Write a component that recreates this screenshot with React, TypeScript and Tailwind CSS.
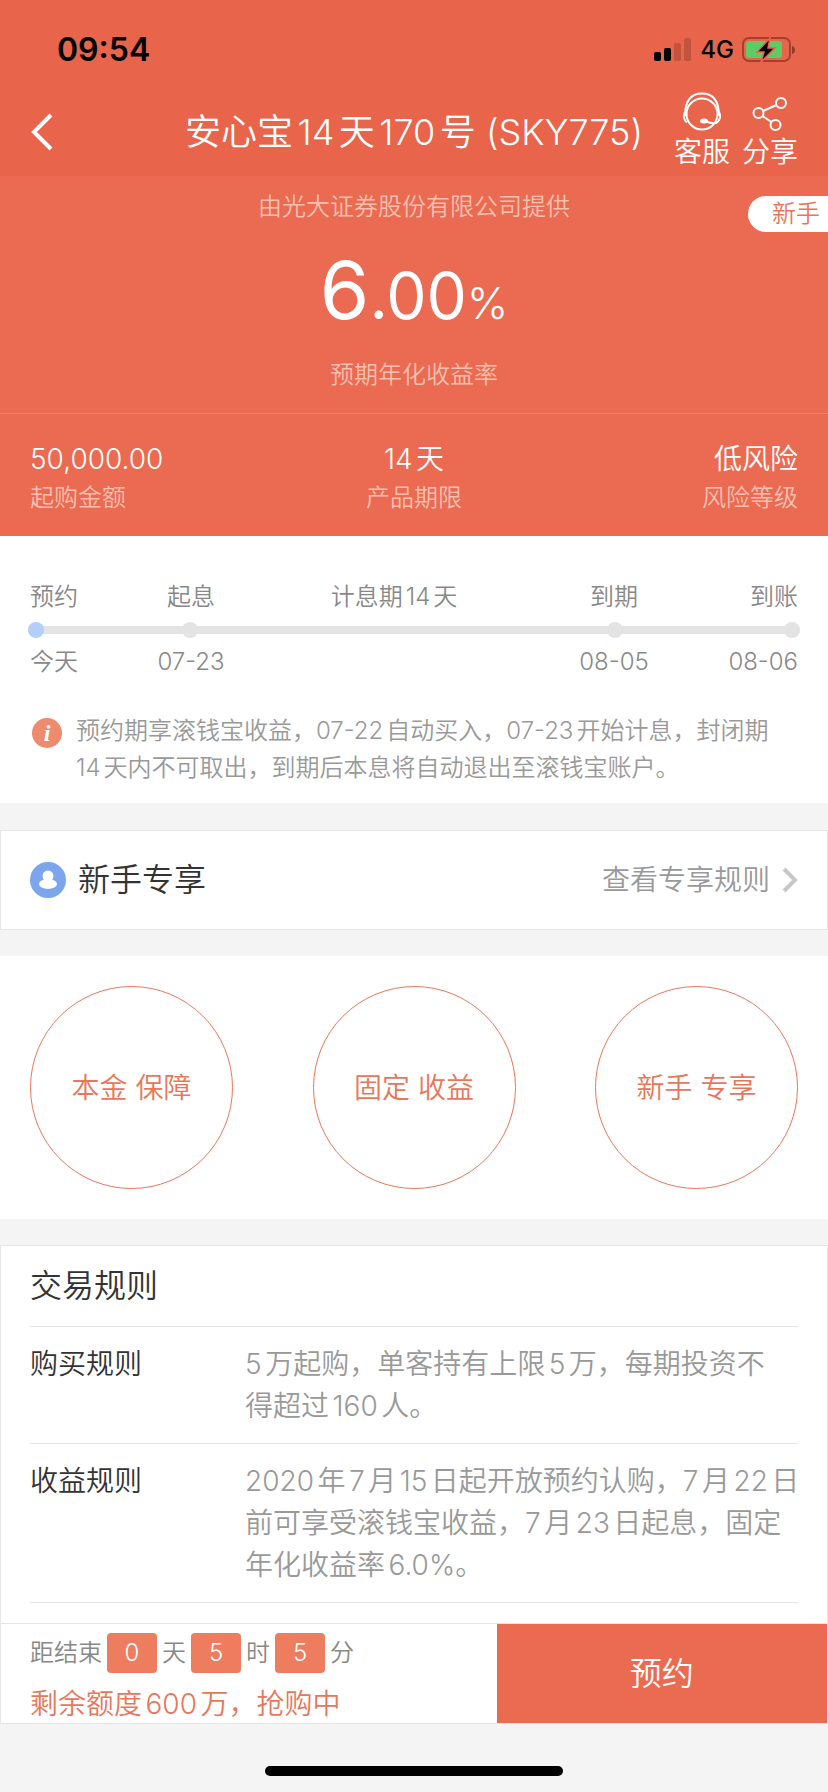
import React from 'react';

interface Step {
  label: string;
  date?: string;
  active?: boolean;
}

interface Rule {
  name: string;
  text: string;
}

const STEPS: Step[] = [
  { label: '预约', date: '今天', active: true },
  { label: '起息', date: '07-23' },
  { label: '计息期14天' },
  { label: '到期', date: '08-05' },
  { label: '到账', date: '08-06' },
];

const STEP_ALIGN = ['text-left', 'text-center', 'text-center', 'text-center', 'text-right'];
const DOT_ALIGN = ['justify-self-start', 'justify-self-center', '', 'justify-self-center', 'justify-self-end'];
const STEP_GRID = 'grid grid-cols-[81fr_160fr_246fr_194fr_87fr]';

const FEATURES = ['本金 保障', '固定 收益', '新手 专享'];

const RULES: Rule[] = [
  { name: '购买规则', text: '5万起购，单客持有上限5万，每期投资不\n得超过160人。' },
  {
    name: '收益规则',
    text: '2020年7月15日起开放预约认购，7月22日\n前可享受滚钱宝收益，7月23日起息，固定\n年化收益率6.0%。',
  },
];

const COUNTDOWN = [
  { value: 0, unit: '天' },
  { value: 5, unit: '时' },
  { value: 5, unit: '分' },
];

const StatusBar = () => (
  <div className="flex h-[88px] items-center justify-between pt-3 pr-8 pl-[57px] text-black">
    <span className="text-[32px] font-semibold">09:54</span>
    <div className="flex items-center gap-2">
      <svg width="38" height="24" viewBox="0 0 38 24">
        <rect x="0" y="14" width="7" height="9" rx="2" />
        <rect x="10" y="10" width="7" height="13" rx="2" />
        <rect x="20" y="5" width="7" height="18" rx="2" fill="#8f3a2b" opacity="0.4" />
        <rect x="30" y="0" width="7" height="23" rx="2" fill="#8f3a2b" opacity="0.4" />
      </svg>
      <span className="text-2xl font-medium">4G</span>
      <svg width="54" height="26" viewBox="0 0 54 26">
        <rect x="1" y="1" width="47" height="23" rx="6" fill="none" stroke="#a3402e" strokeWidth="2" />
        <rect x="4" y="4" width="36" height="17" rx="3" fill="#5ecb64" />
        <path d="M50 9c4 1 4 7 0 8z" fill="#8f3a2b" />
        <path d="M28 1 15 15h7l-3 10 14-14h-7z" stroke="#e8644b" strokeWidth="1.5" />
      </svg>
    </div>
  </div>
);

const HeadsetIcon = () => (
  <svg width="40" height="40" viewBox="0 0 40 40" fill="none" stroke="currentColor" strokeWidth="2">
    <circle cx="20" cy="22" r="15.500" />
    <path d="M3 24C3 8 10 1.500 20 1.500S37 8 37 24" />
    <path d="M3 20c-2 3-1.500 8 2 10.500M37 20c2 3 1.500 8-2 10.500-3 1.500-7 .5-11-1" />
    <ellipse cx="22" cy="29" rx="3" ry="1.500" fill="currentColor" />
  </svg>
);

const ShareIcon = () => (
  <svg width="40" height="40" viewBox="0 0 40 40" fill="none" stroke="currentColor" strokeWidth="2">
    <circle cx="8.500" cy="21" r="5" />
    <circle cx="31" cy="11" r="5" />
    <circle cx="25.500" cy="33" r="5" />
    <path d="m13 19 13.500-6M12.500 24l9 6" />
  </svg>
);

const Hero = () => (
  <section className="relative bg-[#ea6b51] text-white">
    <a
      href="#newcomer"
      className="absolute top-5 right-0 flex h-9 items-center rounded-l-full bg-white pr-2 pl-6 text-2xl text-[#e8775a]"
    >
      新手
    </a>
    <div className="flex flex-col items-center pt-[13px]">
      <p className="text-2xl leading-9 text-[#f9bfb0]">由光大证券股份有限公司提供</p>
      <p className="mt-[15px] flex h-[100px] items-baseline leading-[100px]">
        <span className="text-[80px] font-normal">6</span>
        <span className="text-[64px] font-normal">.00</span>
        <span className="text-[44px]">%</span>
      </p>
      <p className="mt-[17px] text-2xl leading-9 text-[#f9bfb0]">预期年化收益率</p>
    </div>
    <dl className="mt-5 grid grid-cols-3 border-t border-[#f08069] px-[30px] pt-6 pb-5">
      <div className="flex flex-col-reverse">
        <dt className="text-2xl leading-9 text-[#f9bfb0]">起购金额</dt>
        <dd className="text-[28px] leading-[42px]">50,000.00</dd>
      </div>
      <div className="flex flex-col-reverse text-center">
        <dt className="text-2xl leading-9 text-[#f9bfb0]">产品期限</dt>
        <dd className="text-[28px] leading-[42px]">14天</dd>
      </div>
      <div className="flex flex-col-reverse text-right">
        <dt className="text-2xl leading-9 text-[#f9bfb0]">风险等级</dt>
        <dd className="text-[28px] leading-[42px]">低风险</dd>
      </div>
    </dl>
  </section>
);

const Timeline = () => (
  <section className="bg-white px-[30px] pt-[43px] pb-4">
    <div className={`${STEP_GRID} text-2xl leading-9 text-[#888]`}>
      {STEPS.map((step, i) => (
        <span key={step.label} className={`whitespace-nowrap ${STEP_ALIGN[i]}`}>
          {step.label}
        </span>
      ))}
    </div>
    <div className={`${STEP_GRID} -mx-0.5 mt-[11px] h-2 grid-rows-[8px] items-center rounded-full bg-[#e3e3e3]`}>
      {STEPS.map((step, i) => (
        <span
          key={step.label}
          className={`${step.date ? 'size-4' : 'size-0'} rounded-full ${step.active ? 'bg-[#b1cff8]' : 'bg-[#e3e3e3]'} ${DOT_ALIGN[i]}`}
        />
      ))}
    </div>
    <div className={`${STEP_GRID} mt-[10px] text-2xl leading-9 text-[#888]`}>
      {STEPS.map((step, i) => (
        <span key={step.label} className={STEP_ALIGN[i]}>
          {step.date}
        </span>
      ))}
    </div>
    <div className="mt-8 flex gap-[14px]">
      <span className="mt-[6px] ml-0.5 flex size-[30px] shrink-0 items-center justify-center rounded-full bg-[#ee8a6d] font-['Liberation_Serif',serif] text-2xl font-bold text-white italic">
        i
      </span>
      <p className="pb-px text-2xl leading-[37px] whitespace-pre-line text-[#999]">
        {'预约期享滚钱宝收益，07-22自动买入，07-23开始计息，封闭期\n14天内不可取出，到期后本息将自动退出至滚钱宝账户。'}
      </p>
    </div>
  </section>
);

export default function App() {
  return (
    <div className="flex min-h-screen flex-col bg-[#f4f4f4] font-[Inter,'Noto_Sans_CJK_SC',sans-serif] font-[350] [text-autospace:normal]">
      <header className="bg-[#e8644b] text-white">
        <StatusBar />
        <div className="grid h-[88px] grid-cols-[1fr_auto_1fr] items-center px-[30px]">
          <button type="button" aria-label="返回" className="w-12 cursor-pointer">
            <svg width="24" height="38" viewBox="0 0 24 38" fill="none" stroke="currentColor" strokeWidth="4">
              <path d="M21 2 4 19l17 17" />
            </svg>
          </button>
          <h1 className="text-4xl font-[350] whitespace-nowrap">安心宝14天170号 (SKY775)</h1>
          <nav className="flex justify-end gap-3 text-[28px] leading-10">
            <button type="button" className="flex cursor-pointer flex-col items-center">
              <HeadsetIcon />
              客服
            </button>
            <button type="button" className="flex cursor-pointer flex-col items-center">
              <ShareIcon />
              分享
            </button>
          </nav>
        </div>
      </header>

      <Hero />
      <Timeline />

      <section
        id="newcomer"
        className="mt-[27px] flex h-[100px] items-center justify-between border border-[#e6e6e6] bg-white px-[29px]"
      >
        <h2 className="flex items-center gap-3 text-[32px] font-[350] text-[#333]">
          <svg width="36" height="36" viewBox="0 0 36 36">
            <circle cx="18" cy="18" r="18" fill="#7ba6ee" />
            <circle cx="18" cy="14" r="5.500" fill="#fff" />
            <ellipse cx="18" cy="22" rx="9" ry="5" fill="#fff" />
          </svg>
          新手专享
        </h2>
        <a href="#rules" className="flex items-center gap-3 text-[28px] text-[#999]">
          查看专享规则
          <svg width="16" height="26" viewBox="0 0 16 26" fill="none" stroke="#c7c7c7" strokeWidth="4">
            <path d="m2 2 11 11L2 24" />
          </svg>
        </a>
      </section>

      <section className="mt-[26px] flex justify-between bg-white p-[30px]">
        {FEATURES.map((feature) => (
          <div
            key={feature}
            className="flex size-[203px] items-center justify-center rounded-full border border-[#e8775a] text-[28px] text-[#e8775a]"
          >
            {feature}
          </div>
        ))}
      </section>

      <section id="rules" className="mt-[26px] grow border border-b-0 border-[#e6e6e6] bg-white px-[29px] pb-5">
        <h2 className="border-b border-[#e6e6e6] py-4 text-[32px] leading-[48px] font-[350] text-[#333]">交易规则</h2>
        <dl>
          {RULES.map((rule) => (
            <div key={rule.name} className="flex border-b border-[#e6e6e6] py-4 text-[28px] leading-[42px]">
              <dt className="w-[28%] shrink-0 text-[#333]">{rule.name}</dt>
              <dd className="-mr-3 whitespace-pre-line text-[#999]">{rule.text}</dd>
            </div>
          ))}
        </dl>
      </section>

      <footer className="sticky bottom-0 bg-[#f4f4f4]">
        <div className="flex border border-[#e6e6e6] bg-white">
          <div className="w-3/5 pt-[9px] pl-[29px]">
            <div className="flex items-center gap-[5px] text-2xl text-[#888]">
              <span>距结束</span>
              {COUNTDOWN.map((item) => (
                <React.Fragment key={item.unit}>
                  <span className="flex h-10 w-[50px] items-center justify-center rounded-sm bg-[#ed7d5e] text-white">
                    {item.value}
                  </span>
                  <span>{item.unit}</span>
                </React.Fragment>
              ))}
            </div>
            <p className="mt-3 text-[28px] leading-[38px] text-[#e8775a]">剩余额度600万，抢购中</p>
          </div>
          <button type="button" className="w-2/5 cursor-pointer bg-[#ea6b51] text-[32px] text-white">
            预约
          </button>
        </div>
        <div className="flex h-[68px] items-end justify-center pb-4">
          <div className="h-[10px] w-[36%] rounded-full bg-black" />
        </div>
      </footer>
    </div>
  );
}
